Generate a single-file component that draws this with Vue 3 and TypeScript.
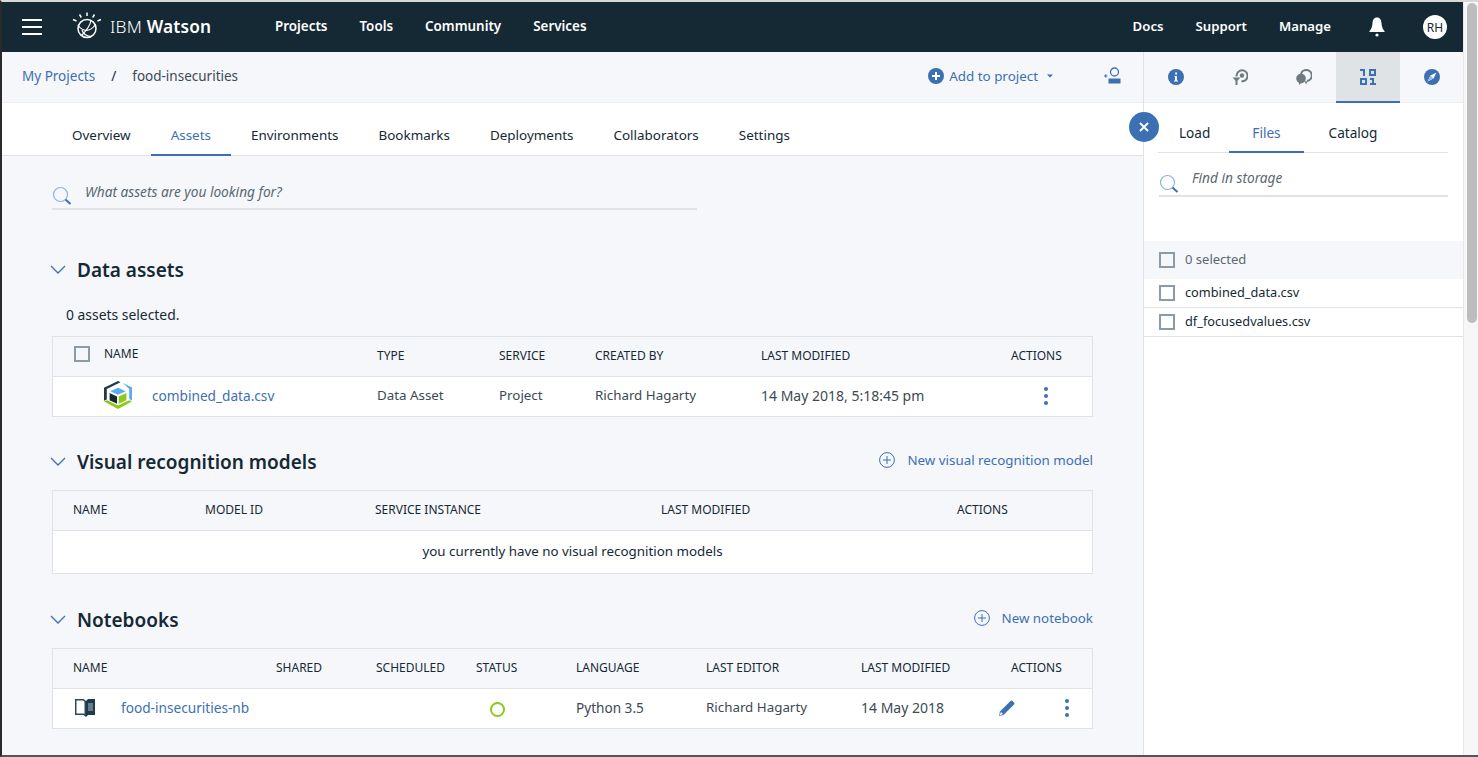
<script setup lang="ts">
const navLeft: string[] = ['Projects', 'Tools', 'Community', 'Services']
const navRight: string[] = ['Docs', 'Support', 'Manage']
const tabs: string[] = ['Overview', 'Assets', 'Environments', 'Bookmarks', 'Deployments', 'Collaborators', 'Settings']
const sideTabs: string[] = ['Load', 'Files', 'Catalog']
const files: string[] = ['combined_data.csv', 'df_focusedvalues.csv']
const dataHeads: string[] = ['TYPE', 'SERVICE', 'CREATED BY', 'LAST MODIFIED', 'ACTIONS']
const visHeads: string[] = ['NAME', 'MODEL ID', 'SERVICE INSTANCE', 'LAST MODIFIED', 'ACTIONS']
const nbHeads: string[] = ['NAME', 'SHARED', 'SCHEDULED', 'STATUS', 'LANGUAGE', 'LAST EDITOR', 'LAST MODIFIED', 'ACTIONS']
</script>

<template>
  <div class="window">
    <div class="app">
      <header class="topbar">
        <div class="burger"><i></i><i></i><i></i></div>
        <svg class="logo" viewBox="0 0 30 28" width="30" height="28" fill="none" stroke="#fff" stroke-width="1.5">
          <circle cx="15" cy="16.500" r="9" />
          <path d="M6.500 14c4 5 11 7 17-1.500M9.500 23.500c3-3 8.500-9 9.500-15M10 18c1 3.500 4 6 9 6.500" stroke-width="1.200" />
          <path d="M15 0.500v3.500M7.500 2.500l1.800 3M22.500 2.500l-1.800 3M1 7.500l3.500 1.500M29 7.500l-3.500 1.500" />
        </svg>
        <div class="brand"><span class="ibm">IBM</span> <b>Watson</b></div>
        <nav class="nav">
          <a v-for="n in navLeft" :key="n">{{ n }}</a>
        </nav>
        <nav class="nav right">
          <a v-for="n in navRight" :key="n">{{ n }}</a>
        </nav>
        <svg class="bell" viewBox="0 0 18 20" width="18" height="20" fill="#fff">
          <path d="M9 0.500c-3.200 0-4.300 2.600-4.500 5.500-.2 3.500-1 6-3 8v1h15v-1c-2-2-2.800-4.500-3-8C13.300 3.100 12.200 .5 9 .5z" />
          <circle cx="9" cy="18" r="1.600" />
        </svg>
        <div class="avatar">RH</div>
      </header>

      <div class="columns">
        <div class="main">
          <div class="crumbs">
            <a class="link">My Projects</a>
            <span class="slash">/</span>
            <span class="crumb-cur">food-insecurities</span>
            <a class="add">
              <svg viewBox="0 0 16 16" width="16" height="16"><circle cx="8" cy="8" r="8" fill="#3d70b2" /><path d="M8 4v8M4 8h8" stroke="#fff" stroke-width="2" /></svg>
              <span>Add to project</span>
              <svg class="caret" viewBox="0 0 6 4" width="6" height="4"><path d="M0 0.500h6L3 3.500z" fill="#3d70b2" /></svg>
            </a>
            <svg class="adduser" viewBox="0 0 17 17" width="17" height="17" fill="none">
              <circle cx="10.500" cy="5" r="4" stroke="#3d70b2" stroke-width="1.300" />
              <rect x="4.500" y="11.500" width="12" height="5" fill="#3d70b2" />
              <path d="M0 9h3.500M1.750 7.200v3.500" stroke="#3d70b2" stroke-width="1" />
            </svg>
          </div>
          <div class="tabs">
            <a v-for="t in tabs" :key="t" class="tab" :class="{ active: t === 'Assets' }">{{ t }}</a>
          </div>

          <div class="content">
            <div class="search main-search">
              <svg class="mag" viewBox="0 0 20 20" width="20" height="20" fill="none">
                <circle cx="8.500" cy="8.500" r="7" stroke="#8fb0dc" stroke-width="1.200" />
                <path d="M13.500 13.500l5 4.500" stroke="#3d70b2" stroke-width="2" />
              </svg>
              <span>What assets are you looking for?</span>
            </div>

            <section class="sec sec-data">
              <div class="sec-head">
                <svg class="chev" viewBox="0 0 16 9" width="16" height="9" fill="none"><path d="M1 1l7 7 7-7" stroke="#3d70b2" stroke-width="1.300" /></svg>
                <h2>Data assets</h2>
              </div>
              <p class="count">0 assets selected.</p>
              <div class="table">
                <div class="row head cols-data">
                  <div class="first"><span class="check"></span><span>NAME</span></div>
                  <div v-for="h in dataHeads" :key="h">{{ h }}</div>
                </div>
                <div class="row body cols-data last">
                  <div class="data-name">
                    <svg class="cube" viewBox="4 2 20 24.500" width="28" height="28" preserveAspectRatio="none">
                      <path d="M4 8l10-6 1.800 1.100-9.800 6v9l-2 1.200z" fill="#1f3a4a" />
                      <path d="M17.500 3.800l6.500 3.800v11.400l-2-1.200V9z" fill="#5aaafa" />
                      <path d="M14 8l5.500 3L14 14l-5.500-3z" fill="#5aaafa" />
                      <path d="M8 12.500l5.300 3v6.300L8 18.800z" fill="#152935" />
                      <path d="M20 12.500v6.300l-5.500 3v-6.300z" fill="#8cc919" />
                      <path d="M4 20l2-1.200 8 4.700 8-4.700 2 1.200-10 6.500z" fill="#8cc919" />
                    </svg>
                    <a class="link">combined_data.csv</a>
                  </div>
                  <div>Data Asset</div>
                  <div>Project</div>
                  <div>Richard Hagarty</div>
                  <div class="num">14 May 2018, 5:18:45 pm</div>
                  <div class="kebab-cell"><span class="kebab"><i></i><i></i><i></i></span></div>
                </div>
              </div>
            </section>

            <section class="sec sec-vis">
              <div class="sec-head">
                <svg class="chev" viewBox="0 0 16 9" width="16" height="9" fill="none"><path d="M1 1l7 7 7-7" stroke="#3d70b2" stroke-width="1.300" /></svg>
                <h2>Visual recognition models</h2>
                <a class="new">
                  <svg viewBox="0 0 16 16" width="16" height="16" fill="none"><circle cx="8" cy="8" r="7.400" stroke="#3d70b2" /><path d="M8 4v8M4 8h8" stroke="#3d70b2" /></svg>
                  <span>New visual recognition model</span>
                </a>
              </div>
              <div class="table">
                <div class="row head cols-vis">
                  <div v-for="h in visHeads" :key="h">{{ h }}</div>
                </div>
                <div class="empty">you currently have no visual recognition models</div>
              </div>
            </section>

            <section class="sec sec-nb">
              <div class="sec-head">
                <svg class="chev" viewBox="0 0 16 9" width="16" height="9" fill="none"><path d="M1 1l7 7 7-7" stroke="#3d70b2" stroke-width="1.300" /></svg>
                <h2>Notebooks</h2>
                <a class="new">
                  <svg viewBox="0 0 16 16" width="16" height="16" fill="none"><circle cx="8" cy="8" r="7.400" stroke="#3d70b2" /><path d="M8 4v8M4 8h8" stroke="#3d70b2" /></svg>
                  <span>New notebook</span>
                </a>
              </div>
              <div class="table">
                <div class="row head cols-nb">
                  <div v-for="h in nbHeads" :key="h">{{ h }}</div>
                </div>
                <div class="row body cols-nb last">
                  <div class="book-cell">
                    <svg viewBox="0 0 20 19" width="20" height="19">
                      <path d="M0 1h8.500L11 3v16L8.500 17H0z" fill="#2c4a5c" />
                      <path d="M1.500 2.500h6.500l1.500 1.200v12L8 15.500H1.500z" fill="#fff" />
                      <path d="M11 3l2-2h7v16h-7l-2 2z" fill="#1f3a4a" />
                      <path d="M13 6h5M13 8h5M13 10h5M13 12h5" stroke="#c5ced4" stroke-width=".9" />
                    </svg>
                    <a class="link">food-insecurities-nb</a>
                  </div>
                  <div></div>
                  <div></div>
                  <div class="status-cell"><span class="status"></span></div>
                  <div class="lang">Python 3.5</div>
                  <div>Richard Hagarty</div>
                  <div class="num">14 May 2018</div>
                  <div class="nb-actions">
                    <svg viewBox="0 0 16 16" width="16" height="16"><path d="M0 16l1-4.500L11.500 1a1.500 1.500 0 0 1 2 0l1.500 1.500a1.500 1.500 0 0 1 0 2L4.500 15z" fill="#3d70b2" /><path d="M0.500 15.500L2 12l2 2z" fill="#fff" /></svg>
                    <span class="kebab"><i></i><i></i><i></i></span>
                  </div>
                </div>
              </div>
            </section>
          </div>
        </div>

        <aside class="panel">
          <div class="tools">
            <div class="tool">
              <svg viewBox="0 0 16 16" width="16" height="16"><circle cx="8" cy="8" r="8" fill="#3d70b2" /><path d="M6.500 7h2.500v4.500h1v1H6v-1h1V8H6.500zM7.200 3.500h1.800v2H7.200z" fill="#fff" /></svg>
            </div>
            <div class="tool">
              <svg viewBox="0 0 16 16" width="16" height="16" fill="none">
                <path d="M4.600 7.500A5.500 5.500 0 1 1 9.500 12.300" stroke="#6f7b7f" stroke-width="2" />
                <circle cx="10" cy="6.500" r="2.200" fill="#6f7b7f" />
                <path d="M0.500 8.500h8l-3 3.200V16h-2v-4.300z" fill="#6f7b7f" />
              </svg>
            </div>
            <div class="tool">
              <svg viewBox="0 0 16 16" width="16" height="16" fill="none">
                <path d="M5 5A5.500 5.500 0 1 1 11 12" stroke="#6f7b7f" stroke-width="2" />
                <circle cx="5" cy="9.500" r="4.800" fill="#6f7b7f" />
                <path d="M3 12v4l3.500-3z" fill="#6f7b7f" />
                <path d="M8.500 12l1.500 3.500 1.500-3z" fill="#6f7b7f" />
              </svg>
            </div>
            <div class="tool active">
              <svg viewBox="0 0 16 16" width="16" height="16" fill="#3d70b2">
                <path d="M0 0h5v7H3V2H0zM9 0h7v7H9zm2 2v3h3V2zM0 9h7v7H0zm2 2v3h3v-3zM10 9h4v5h2v2h-6v-2h2v-3h-2z" />
              </svg>
            </div>
            <div class="tool">
              <svg viewBox="0 0 16 16" width="16" height="16"><circle cx="8" cy="8" r="8" fill="#3d70b2" /><path d="M12.500 3.500L9.500 9.500 3.500 12.500 6.500 6.500z" fill="#fff" /><path d="M6.500 6.500L9.500 9.500 3.500 12.500z" fill="#9dbbe0" /></svg>
            </div>
          </div>
          <div class="side">
            <button class="close" type="button" aria-label="Close">
              <svg viewBox="0 0 10 10" width="10" height="10"><path d="M1 1l8 8M9 1l-8 8" stroke="#fff" stroke-width="1.800" /></svg>
            </button>
            <div class="side-tabs">
              <a v-for="t in sideTabs" :key="t" class="stab" :class="{ active: t === 'Files' }">{{ t }}</a>
            </div>
            <div class="search side-search">
              <svg class="mag" viewBox="0 0 20 20" width="20" height="20" fill="none">
                <circle cx="8.500" cy="8.500" r="7" stroke="#8fb0dc" stroke-width="1.200" />
                <path d="M13.500 13.500l5 4.500" stroke="#3d70b2" stroke-width="2" />
              </svg>
              <span>Find in storage</span>
            </div>
            <div class="sel-row"><span class="check"></span><span>0 selected</span></div>
            <div v-for="f in files" :key="f" class="file-row"><span class="check"></span><span>{{ f }}</span></div>
          </div>
        </aside>
      </div>
    </div>
    <div class="scrollbar"><div class="thumb"></div></div>
  </div>
</template>

<style>
html, body { margin: 0; background: #fff; overflow: hidden; }
</style>

<style scoped>
.window {
  width: 1478px;
  height: 757px;
  box-sizing: border-box;
  overflow: hidden;
  display: flex;
  border-top: 2px solid #d8d8d8;
  border-bottom: 2px solid #555;
  border-left: 2px solid #2a2a2a;
  font-family: "Noto Sans", "Open Sans", sans-serif;
  font-size: 13.35px;
  color: #152935;
  background: #fff;
}
.app { width: 1461px; display: flex; flex-direction: column; min-height: 0; }
.scrollbar { flex: 1; background: #f7f7f7; border-left: 1px solid #e8e8e8; padding: 1px 1px 0 3px; }
.thumb { width: 10px; height: 320px; border-radius: 5px; background: #bdbdbd; }

.topbar { height: 50px; flex: none; background: #152935; color: #fff; display: flex; align-items: center; }
.burger { margin-left: 20px; width: 20px; display: flex; flex-direction: column; gap: 5px; }
.burger i { display: block; height: 2px; background: #fff; }
.logo { margin-left: 30px; margin-top: -3px; flex: none; }
.brand { margin-left: 8px; font-size: 17.3px; white-space: nowrap; width: 152px; letter-spacing: .2px; padding-bottom: 2px; }
.ibm { font-weight: 300; }
.brand b { font-weight: 600; }
.nav { display: flex; gap: 32px; margin-left: 13px; font-weight: 600; font-size: 13.4px; padding-bottom: 3px; }
.nav.right { margin-left: auto; font-size: 13.2px; gap: 32px; }
.bell { margin-left: 37px; flex: none; }
.avatar { margin-left: 37px; margin-right: 16px; width: 24px; height: 24px; border-radius: 50%; background: #fff; color: #152935; font-size: 12px; display: flex; align-items: center; justify-content: center; }

.columns { flex: 1; display: flex; min-height: 0; }
.main { width: 1141px; flex: none; background: #f5f7fa; display: flex; flex-direction: column; overflow: hidden; }
.crumbs { height: 51px; box-sizing: border-box; flex: none; display: flex; align-items: center; padding: 0 22px 3px 20px; border-bottom: 1px solid #eceef1; font-size: 13.5px; }
.link { color: #3d70b2; }
.slash { margin: 0 16px; }
.crumb-cur { color: #3c4a54; }
.add { margin-left: auto; display: flex; align-items: center; color: #3d70b2; gap: 5px; font-size: 13.4px; }
.caret { margin-left: 4px; }
.adduser { margin-left: 51px; }
.tabs { height: 53px; flex: none; box-sizing: border-box; background: #fff; border-bottom: 1px solid #dfe3e6; display: flex; padding-left: 50px; font-size: 13.45px; }
.tab { padding: 0 20px; height: 53px; box-sizing: border-box; line-height: 64px; white-space: nowrap; }
.tab.active { color: #3d70b2; border-bottom: 2px solid #3d70b2; }

.content { padding: 0 50px; flex: 1; }
.search { display: flex; align-items: center; border-bottom: 2px solid #dfe3e6; font-style: italic; color: #5a6872; box-sizing: border-box; font-size: 13.7px; }
.mag { flex: none; margin-top: 8px; }
.main-search { width: 645px; height: 34px; margin-top: 20px; gap: 13px; padding-bottom: 2px; }
.main-search .mag { margin-top: 10px; }
.sec-head { display: flex; align-items: center; height: 30px; }
.chev { margin-left: -2px; flex: none; }
h2 { margin: 0 0 0 11px; padding-top: 2px; font-size: 19px; font-weight: 600; color: #152935; }
.new { margin-left: auto; display: flex; align-items: center; gap: 12px; color: #3d70b2; margin-top: -2px; }
.sec-data { margin-top: 44px; }
.count { margin: 21px 0 0 14px; line-height: 20px; font-size: 13.9px; }
.table { border: 1px solid #dfe3e6; border-bottom: 0; background: #fff; }
.sec-data .table { margin-top: 11px; }
.sec-vis { margin-top: 29px; }
.sec-vis .table, .sec-nb .table { margin-top: 14px; }
.sec-nb { margin-top: 30px; }
.row { display: grid; align-items: center; border-bottom: 1px solid #dfe3e6; }
.head { height: 40px; box-sizing: border-box; background: #f5f7fa; font-size: 12px; padding-bottom: 2px; }
.body { height: 40px; box-sizing: border-box; background: #fff; color: #3c4a54; padding-bottom: 3px; }
.num { font-size: 14px; }
.cols-data { grid-template-columns: 324px 122px 96px 166px 250px 1fr; }
.cols-vis { grid-template-columns: 132px 170px 286px 296px 1fr; padding-left: 20px; }
.cols-nb { grid-template-columns: 203px 100px 100px 100px 130px 155px 150px 1fr; padding-left: 20px; }
.first { display: flex; align-items: center; padding-left: 21px; gap: 14px; margin-top: -4px; }
.data-name { display: flex; align-items: center; gap: 20px; padding-left: 51px; }
.data-name .link, .book-cell .link { white-space: nowrap; font-size: 13.65px; }
.check { flex: none; width: 16px; height: 16px; box-sizing: border-box; border: 2px solid #8c9ba5; display: block; background: transparent; }
.kebab-cell { padding-left: 33px; margin-top: 1px; }
.kebab { display: inline-flex; flex-direction: column; gap: 3px; vertical-align: middle; }
.kebab i { display: block; width: 4px; height: 4px; border-radius: 50%; background: #3d70b2; }
.empty { height: 43px; border-bottom: 1px solid #dfe3e6; box-sizing: border-box; display: flex; align-items: center; justify-content: center; color: #152935; padding-bottom: 2px; }
.book-cell { display: flex; align-items: center; gap: 26px; padding-left: 2px; }
.status-cell { padding-left: 14px; display: flex; margin-top: 4px; }
.status { width: 15px; height: 15px; box-sizing: border-box; border-radius: 50%; border: 2px solid #8cc919; display: block; }
.lang { font-size: 13.6px; }
.nb-actions { display: flex; align-items: center; gap: 50px; margin-left: -12px; margin-top: 2px; }

.panel { flex: 1; border-left: 1px solid #dfe3e6; display: flex; flex-direction: column; background: #fff; min-width: 0; }
.tools { height: 51px; flex: none; box-sizing: border-box; display: grid; grid-template-columns: repeat(5, 64px); background: #f5f7fa; border-bottom: 1px solid #eceef1; }
.tool { display: flex; align-items: center; justify-content: center; height: 50px; }
.tool.active { background: #dfe3e6; border-bottom: 2px solid #3d70b2; box-sizing: border-box; height: 51px; }
.side { position: relative; flex: 1; }
.close { position: absolute; left: -15px; top: 9px; width: 30px; height: 30px; border-radius: 50%; background: #3d70b2; border: 0; padding: 0; display: flex; align-items: center; justify-content: center; }
.side-tabs { display: flex; margin: 0 15px 0 14px; height: 50px; box-sizing: border-box; border-bottom: 1px solid #dfe3e6; font-size: 13.6px; }
.stab { padding: 0 19px 0 21px; box-sizing: border-box; height: 50px; line-height: 60px; }
.stab.active { color: #3d70b2; border-bottom: 2px solid #3d70b2; padding: 0 23px; }
.stab:last-child { padding-left: 25px; }
.side-search { margin: 12px 15px 0 15px; height: 32px; gap: 13px; padding-bottom: 5px; }
.side-search .mag { margin-top: 13px; }
.sel-row { margin-top: 44px; height: 38px; background: #f5f7fa; display: flex; align-items: center; gap: 10px; padding-left: 15px; font-size: 13px; color: #5a6872; }
.sel-row span:last-child { padding-bottom: 3px; }
.file-row { height: 29px; box-sizing: border-box; border-bottom: 1px solid #dfe3e6; display: flex; align-items: center; gap: 10px; padding-left: 15px; font-size: 12.75px; }
.file-row span:last-child { padding-bottom: 2px; }
</style>
